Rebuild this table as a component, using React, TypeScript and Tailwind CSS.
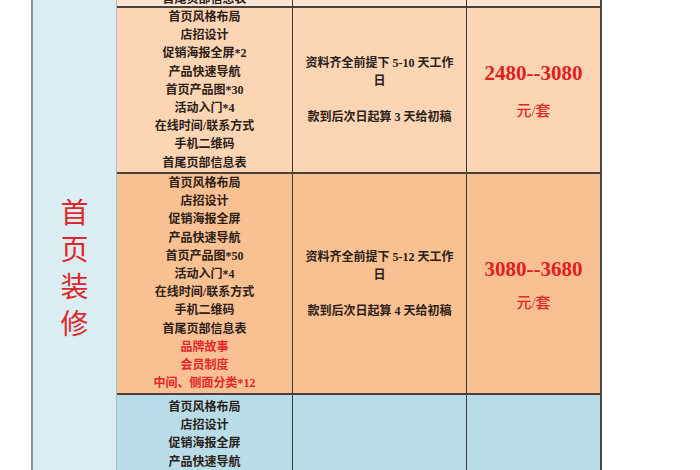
import React from 'react';

type Item = { text: string; red?: boolean };

type Tier = {
  bg: string;
  h: string;
  pad?: string;
  items: Item[];
  days?: string;
  draft?: string;
  price?: string;
  gap?: string;
};

const tiers: Tier[] = [
  {
    bg: 'bg-[#fcd5b4]',
    h: 'h-[166px]',
    items: [
      { text: '首页风格布局' },
      { text: '店招设计' },
      { text: '促销海报全屏*2' },
      { text: '产品快速导航' },
      { text: '首页产品图*30' },
      { text: '活动入门*4' },
      { text: '在线时间/联系方式' },
      { text: '手机二维码' },
      { text: '首尾页部信息表' },
    ],
    days: '5-10',
    draft: '3',
    price: '2480--3080',
    gap: 'mt-[18px]',
  },
  {
    bg: 'bg-[#f9c092]',
    h: 'h-[221px]',
    items: [
      { text: '首页风格布局' },
      { text: '店招设计' },
      { text: '促销海报全屏' },
      { text: '产品快速导航' },
      { text: '首页产品图*50' },
      { text: '活动入门*4' },
      { text: '在线时间/联系方式' },
      { text: '手机二维码' },
      { text: '首尾页部信息表' },
      { text: '品牌故事', red: true },
      { text: '会员制度', red: true },
      { text: '中间、侧面分类*12', red: true },
    ],
    days: '5-12',
    draft: '4',
    price: '3080--3680',
    gap: 'mt-[14px]',
  },
  {
    bg: 'bg-[#b8dde8]',
    h: 'h-[221px]',
    pad: 'pt-[3px]',
    items: [
      { text: '首页风格布局' },
      { text: '店招设计' },
      { text: '促销海报全屏' },
      { text: '产品快速导航' },
    ],
  },
];

const App: React.FC = () => {
  return (
    <div className="h-[470px] w-[700px] overflow-hidden bg-white [font-family:'Liberation_Serif','Noto_Sans_CJK_SC',serif] text-[#2b2118]">
      <div className="ml-[31px] flex w-[571px] border-l-2 border-r-2 border-l-[#8e9396] border-r-[#4a4642]">
        {/* 首页装修 */}
        <div className="w-[84px] shrink-0 border-r border-[#a9bcc4] bg-[#daedf3] pt-[193px]">
          <div className="flex flex-col items-center text-[28px] leading-[37px] text-[#e0262b] [font-family:'Noto_Sans_CJK_SC',sans-serif]">
            <span>首</span>
            <span>页</span>
            <span>装</span>
            <span>修</span>
          </div>
        </div>

        <div className="flex-1">
          {/* tail of the previous tier */}
          <div className="flex h-[8px] border-b-2 border-[#4b4138] bg-[#fbe6d6]">
            <div className="flex w-[176px] items-end justify-center overflow-hidden border-r border-[#3d3935] text-[12px] font-bold">
              <span className="translate-y-[2px] leading-[18px]">首尾页部信息表</span>
            </div>
            <div className="w-[174px] border-r border-[#3d3935]" />
            <div className="flex-1" />
          </div>

          {tiers.map((t, i) => (
            <div key={i} className={`flex border-b-2 border-[#4b4138] ${t.bg} ${t.h}`}>
              <div className={`flex w-[176px] flex-col items-center border-r border-[#3d3935] text-[12px] font-bold leading-[18.2px] ${t.pad ?? ''}`}>
                {t.items.map((it) => (
                  <span key={it.text} className={it.red ? 'text-[#e5262a]' : ''}>
                    {it.text}
                  </span>
                ))}
              </div>
              <div className="flex w-[174px] flex-col items-center justify-center border-r border-[#3d3935] text-center text-[12px] font-bold leading-[18px]">
                {t.days && (
                  <>
                    <span>资料齐全前提下 {t.days} 天工作</span>
                    <span>日</span>
                    <span>&nbsp;</span>
                    <span>款到后次日起算 {t.draft} 天给初稿</span>
                  </>
                )}
              </div>
              <div className="flex flex-1 flex-col items-center justify-center">
                {t.price && (
                  <>
                    <span className="text-[21px] font-bold leading-[24px] text-[#e0201f]">{t.price}</span>
                    <span className={`text-[15px] font-medium leading-[16px] text-[#dc2a26] ${t.gap}`}>元/套</span>
                  </>
                )}
              </div>
            </div>
          ))}
        </div>
      </div>
    </div>
  );
};

export default App;
